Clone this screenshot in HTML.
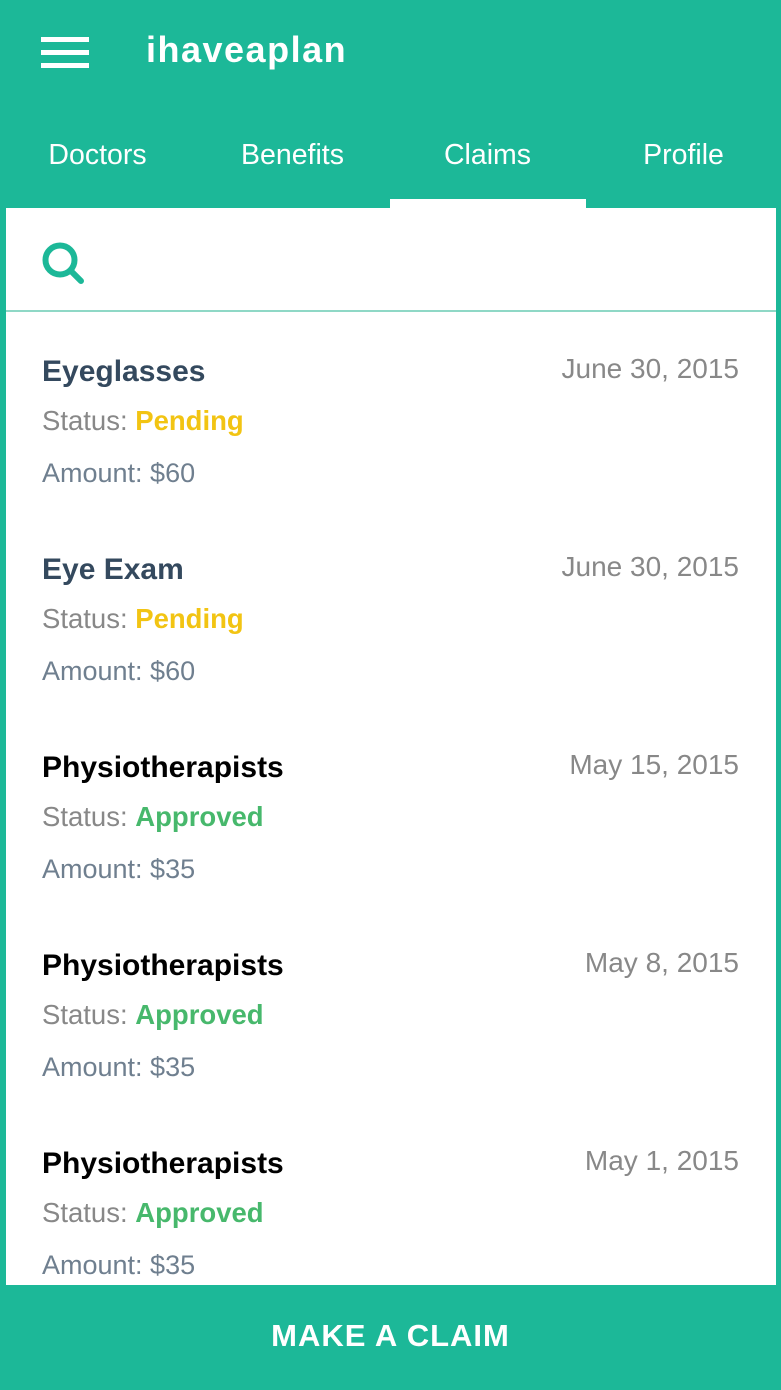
<!DOCTYPE html>
<html><head><style>
*{margin:0;padding:0;box-sizing:border-box}
body{width:781px;height:1390px;background:#1cb898;font-family:"Liberation Sans",Roboto,sans-serif;position:relative;overflow:hidden}
.a{position:absolute;white-space:nowrap;line-height:40px}
.ham{position:absolute;left:41px;width:48px;height:5px;background:#fff}
.tab{position:absolute;top:135px;line-height:40px;font-size:28.5px;color:#fff;text-align:center;width:195px}
.card{position:absolute;left:6px;top:208px;width:770px;height:1077px;background:#fff}
.t{font-size:30px;font-weight:bold;left:42px}
.s{font-size:27.5px;color:#888;left:42px}
.m{font-size:27px;color:#6f7f8f;left:42px}
.d{font-size:28px;color:#888;right:42px}
.p{color:#f2c413;font-weight:bold}
.g{color:#47b86c;font-weight:bold}
</style></head><body>
<div class="ham" style="top:37px"></div>
<div class="ham" style="top:50px"></div>
<div class="ham" style="top:63px"></div>
<div class="a" style="left:146px;top:30px;font-size:36px;font-weight:bold;color:#fff;letter-spacing:1.5px">ihaveaplan</div>
<div class="tab" style="left:0">Doctors</div>
<div class="tab" style="left:195px">Benefits</div>
<div class="tab" style="left:390px">Claims</div>
<div class="tab" style="left:586px">Profile</div>
<div style="position:absolute;left:390px;top:199px;width:196px;height:9px;background:#fff"></div>
<div class="card">
<svg style="position:absolute;left:34px;top:31px" width="52" height="52" viewBox="0 0 52 52"><circle cx="20" cy="21" r="14.5" fill="none" stroke="#1cb898" stroke-width="6"/><line x1="31" y1="32" x2="41" y2="42" stroke="#1cb898" stroke-width="6" stroke-linecap="round"/></svg>
<div style="position:absolute;left:0;top:102px;width:770px;height:2px;background:#8fd8c6"></div>
</div>
<div class="a t" style="top:352px;color:#34495e">Eyeglasses</div>
<div class="a d" style="top:349px">June 30, 2015</div>
<div class="a s" style="top:401px">Status: <span class="p">Pending</span></div>
<div class="a m" style="top:453px">Amount: $60</div>

<div class="a t" style="top:550px;color:#34495e">Eye Exam</div>
<div class="a d" style="top:547px">June 30, 2015</div>
<div class="a s" style="top:599px">Status: <span class="p">Pending</span></div>
<div class="a m" style="top:651px">Amount: $60</div>

<div class="a t" style="top:748px;color:#000">Physiotherapists</div>
<div class="a d" style="top:745px">May 15, 2015</div>
<div class="a s" style="top:797px">Status: <span class="g">Approved</span></div>
<div class="a m" style="top:849px">Amount: $35</div>

<div class="a t" style="top:946px;color:#000">Physiotherapists</div>
<div class="a d" style="top:943px">May 8, 2015</div>
<div class="a s" style="top:995px">Status: <span class="g">Approved</span></div>
<div class="a m" style="top:1047px">Amount: $35</div>

<div class="a t" style="top:1144px;color:#000">Physiotherapists</div>
<div class="a d" style="top:1141px">May 1, 2015</div>
<div class="a s" style="top:1193px">Status: <span class="g">Approved</span></div>
<div class="a m" style="top:1245px">Amount: $35</div>

<div style="position:absolute;left:0;top:1285px;width:781px;height:105px;background:#1cb898"></div>
<div class="a" style="left:0;width:781px;text-align:center;top:1316px;font-size:31px;font-weight:bold;color:#fff;letter-spacing:1px">MAKE A CLAIM</div>
</body></html>
